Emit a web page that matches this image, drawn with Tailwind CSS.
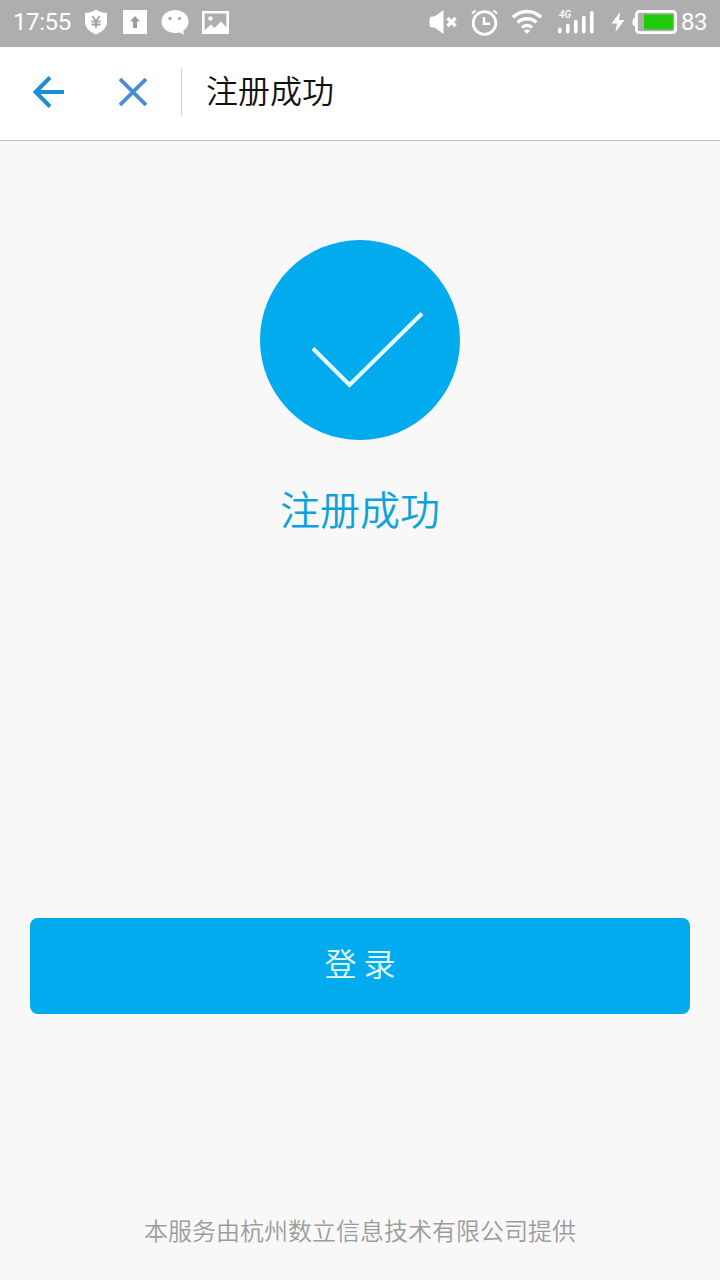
<!DOCTYPE html>
<html lang="zh-CN">
<head>
    <meta charset="UTF-8">
    <meta name="viewport" content="width=device-width, initial-scale=1.0">
    <title>注册成功</title>
    <script src="https://cdn.jsdelivr.net/npm/@tailwindcss/browser@4"></script>
</head>
<body class="bg-[#f8f8f9] font-['Noto_Sans_CJK_SC',sans-serif]">
    <div class="flex flex-col h-screen">
        <!-- status bar -->
        <div class="flex items-center justify-between h-[47px] pb-[3px] pl-[13px] pr-3 bg-[#aeaeae] text-white font-[Roboto,sans-serif] text-2xl leading-none">
            <div class="flex items-center">
                <span class="w-[59px] tracking-[-0.4px]">17:55</span>
                <svg class="ml-3 w-6 h-[26px]" viewBox="0 0 24 26" fill="none">
                    <path d="M12 0.5C9 3 5 3.8 1 3.8V13c0 6 5 9.8 11 12.5C18 22.800 23 19 23 13V3.800C19 3.800 15 3 12 .5z" fill="#fff"/>
                    <path d="M8.300 7l3.700 5 3.700-5M12 12v7M7.500 12.500h9M7.500 15.500h9" stroke="#a2a2a2" stroke-width="1.800"/>
                </svg>
                <svg class="ml-[15px] w-6 h-6" viewBox="0 0 24 24">
                    <path d="M0 0h24v24H0z" fill="#fff"/>
                    <path d="M12 6l5 5.500h-3V18h-4v-6.500H7z" fill="#9b9b9b"/>
                </svg>
                <svg class="ml-3.5 w-7 h-[25px]" viewBox="0 0 28 25">
                    <path d="M14 0c7.500 0 13.500 5 13.500 11.500 0 4-2 7.300-5.300 9.300l.8 4-4.300-2.400c-1.500.4-3 .6-4.700.6C6.500 23 .5 18 .5 11.500S6.500 0 14 0z" fill="#fff"/>
                    <circle cx="9" cy="8.500" r="1.700" fill="#aeaeae"/>
                    <circle cx="18.500" cy="8.500" r="1.700" fill="#aeaeae"/>
                </svg>
                <svg class="ml-[13px] w-[27px] h-[23px]" viewBox="0 0 27 23">
                    <path d="M1.300 1.300h24.400v20.400H1.300z" fill="none" stroke="#fff" stroke-width="2.600"/>
                    <path d="M2.500 19.500l6.500-6 3.500 3.500 6.500-6.500 6 6.500v4h-22.500z" fill="#fff"/>
                    <circle cx="8.500" cy="7.500" r="2.200" fill="#fff"/>
                </svg>
            </div>
            <div class="flex items-center">
                <svg class="w-7 h-[26px]" viewBox="0 0 28 26">
                    <path d="M14.500 1v24L5.500 18.500H2.500C1.200 18.500.5 17 .5 13s.7-5.500 2-5.500h3z" fill="#fff"/>
                    <path d="M18.500 9l8 8M26.500 9l-8 8" stroke="#fff" stroke-width="3.400"/>
                </svg>
                <svg class="ml-3.5 w-[27px] h-[27px]" viewBox="0 0 27 27" fill="none" stroke="#fff">
                    <circle cx="13.500" cy="14" r="11.300" stroke-width="2.800"/>
                    <path d="M13 8v6.800h6" stroke-width="2.500"/>
                    <path d="M1 4.500l3.500-3M26 4.500l-3.500-3" stroke-width="2.200"/>
                </svg>
                <svg class="ml-3.5 w-[30px] h-[26px]" viewBox="0 0 30 26" fill="none" stroke="#fff" stroke-width="3.400">
                    <path d="M1 8.200C9 .5 21 .5 29 8.200"/>
                    <path d="M5.500 13.500c5.500-5 13.500-5 19 0"/>
                    <path d="M10 18.500c3-2.800 7-2.800 10 0"/>
                    <path d="M15 25l-3-3.300c1.500-1.700 4.500-1.700 6 0z" fill="#fff" stroke="none"/>
                </svg>
                <div class="relative ml-[15px] w-[37px] h-[26px]">
                    <span class="absolute left-0.5 top-px text-[10px] leading-none font-medium italic">4G</span>
                    <svg class="w-[37px] h-[26px]" viewBox="0 0 37 26" stroke="#fff" stroke-width="3.600" stroke-linecap="round">
                        <path d="M2.800 20.300v2.500M10.800 16.500v6.300M18.800 12.500v10.300M26.800 8.500v14.300M34.800 3.800v19"/>
                    </svg>
                </div>
                <svg class="ml-[17px] w-3.5 h-5" viewBox="0 0 14 20">
                    <path d="M9 0L.5 11.500H6L4.500 20 13.500 8H8z" fill="#fff"/>
                </svg>
                <svg class="ml-[7px] w-[45px] h-6" viewBox="0 0 45 24">
                    <rect x="4.400" y="1.400" width="39.200" height="21.200" rx="3" fill="none" stroke="#fff" stroke-width="2.800"/>
                    <path d="M3.500 7.500C1 8 .5 9 .5 12s.5 4 3 4.500z" fill="#fff"/>
                    <path d="M12 4.500h29v15H12z" fill="#1fcb0c"/>
                </svg>
                <span class="ml-1 w-[27px] tracking-[-0.4px]">83</span>
            </div>
        </div>

        <!-- title bar -->
        <div class="flex items-center h-[94px] pb-1 pl-8 bg-white border-b border-[#bdbdbd]">
            <svg class="w-8 h-8" viewBox="0 0 32 32" fill="none" stroke="#1b8fd6" stroke-width="4">
                <path d="M18 1.500L3.500 16 18 30.500M3.500 16H32"/>
            </svg>
            <svg class="ml-[55px] w-7 h-7" viewBox="0 0 28 28" stroke="#4a8cd8" stroke-width="3.800">
                <path d="M1 1l26 26M27 1L1 27"/>
            </svg>
            <div class="ml-[34px] w-px h-12 bg-[#d2d2d2]"></div>
            <h1 class="ml-6 pb-[5px] text-[32px] leading-none font-[350] text-[#111]">注册成功</h1>
        </div>

        <!-- result -->
        <div class="flex flex-col items-center flex-1 px-[30px] pt-[99px]">
            <svg class="w-[200px] h-[200px]" viewBox="0 0 200 200">
                <circle cx="100" cy="100" r="100" fill="#02aaee"/>
                <path d="M53 108.500L89.500 145 162 73.500" fill="none" stroke="#e6ffff" stroke-width="4"/>
            </svg>
            <p class="mt-12 text-[40px] leading-none font-[350] text-[#0ea2dc]">注册成功</p>
            <button class="mt-[390px] w-full h-24 pb-2 rounded-lg bg-[#02aaee] text-[32px] leading-none font-[350] text-[#e6ffff]">登 录</button>
            <p class="mt-auto mb-[38px] text-2xl leading-none font-[350] text-[#9c9c9c]">本服务由杭州数立信息技术有限公司提供</p>
        </div>
    </div>
</body>
</html>
